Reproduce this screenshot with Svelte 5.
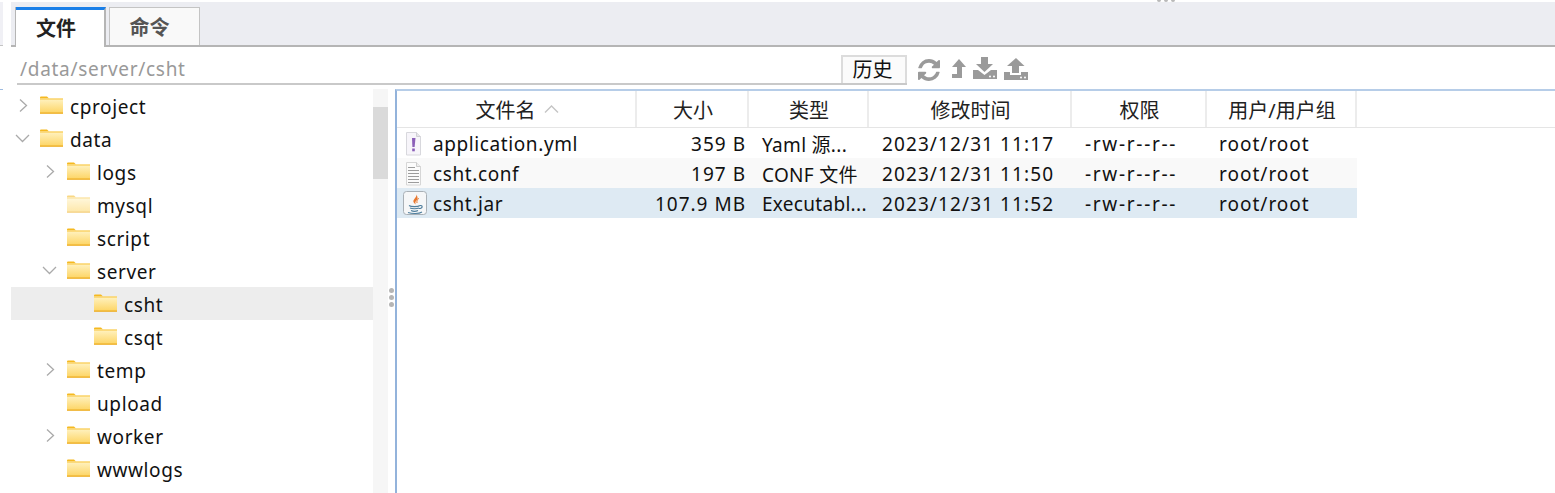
<script>
    const tree = [
        { name: "cproject", depth: 0, arrow: "right" },
        { name: "data", depth: 0, arrow: "down" },
        { name: "logs", depth: 1, arrow: "right" },
        { name: "mysql", depth: 1, pale: true },
        { name: "script", depth: 1 },
        { name: "server", depth: 1, arrow: "down" },
        { name: "csht", depth: 2, selected: true },
        { name: "csqt", depth: 2 },
        { name: "temp", depth: 1, arrow: "right" },
        { name: "upload", depth: 1 },
        { name: "worker", depth: 1, arrow: "right" },
        { name: "wwwlogs", depth: 1 }
    ];

    const files = [
        { icon: "yml", name: "application.yml", size: "359 B", type: "Yaml 源...", time: "2023/12/31 11:17", perm: "-rw-r--r--", owner: "root/root" },
        { icon: "conf", name: "csht.conf", size: "197 B", type: "CONF 文件", time: "2023/12/31 11:50", perm: "-rw-r--r--", owner: "root/root" },
        { icon: "jar", name: "csht.jar", size: "107.9 MB", type: "Executabl...", time: "2023/12/31 11:52", perm: "-rw-r--r--", owner: "root/root" }
    ];
</script>

<div class="page">
    <div class="edge">
        <div class="edge-top"></div>
        <div class="edge-blue"></div>
    </div>

    <div class="main">
        <div class="top-strip">
            <span class="grip-top"><i></i><i></i><i></i></span>
        </div>

        <div class="tabbar">
            <div class="tab active">文件</div>
            <div class="tab">命令</div>
        </div>

        <div class="toolbar">
            <div class="path-field">
                <span class="path">/data/server/csht</span>
                <button class="history">历史</button>
            </div>
            <div class="tools">
                <svg class="tool" width="22" height="22" viewBox="0 0 1536 1536"><path fill="#9a9a9a" d="M1511 928q0 5-1 7-64 268-268 434.5t-478 166.5q-146 0-282.5-55t-243.5-157l-129 129q-19 19-45 19t-45-19-19-45v-448q0-26 19-45t45-19h448q26 0 45 19t19 45-19 45l-137 137q71 66 161 102t187 36q134 0 250-65t186-179q11-17 53-117 8-23 30-23h192q13 0 22.5 9.5t9.5 22.5zm25-800v448q0 26-19 45t-45 19h-448q-26 0-45-19t-19-45 19-45l138-138q-148-137-349-137-134 0-250 65t-186 179q-11 17-53 117-8 23-30 23h-199q-13 0-22.5-9.5t-9.5-22.5v-7q65-268 270-434.5t480-166.5q146 0 284 55.5t245 156.5l130-129q19-19 45-19t45 19 19 45z"/></svg>
                <svg class="tool up" width="16" height="19" viewBox="0 0 16 19"><path fill="#9a9a9a" d="M8 0 15 8H11V19H1V15H6V8H1Z"/></svg>
                <svg class="tool down" width="24" height="22" viewBox="0 0 24 22"><path fill="#9a9a9a" d="M8 0H15V7H20L11.5 15 3 7H8ZM0 13H5L11.5 18 18 13H24V22H0Z"/><circle cx="17" cy="19.5" r="1" fill="#fff"/><circle cx="21" cy="19.5" r="1" fill="#fff"/></svg>
                <svg class="tool upl" width="24" height="22" viewBox="0 0 24 22"><path fill="#9a9a9a" d="M12 0 20.5 8H15V15H8V8H3ZM0 14H6V17H17V14H24V22H0Z"/><circle cx="17" cy="19.5" r="1" fill="#fff"/><circle cx="21" cy="19.5" r="1" fill="#fff"/></svg>
            </div>
        </div>

        <div class="body">
            <div class="tree">
                {#each tree as node}
                    <div class="node" class:selected={node.selected} class:d1={node.depth === 1} class:d2={node.depth === 2}>
                        <span class="arrow">
                            {#if node.arrow === "right"}
                                <svg class="chev-right" width="11" height="15" viewBox="0 0 11 15"><path d="M2 1.5 8.5 7.5 2 13.5" fill="none" stroke="#aaa" stroke-width="1.3"/></svg>
                            {:else if node.arrow === "down"}
                                <svg width="15" height="11" viewBox="0 0 15 11"><path d="M1 2 7.5 8.5 14 2" fill="none" stroke="#aaa" stroke-width="1.3"/></svg>
                            {/if}
                        </span>
                        <svg class="folder" class:pale={node.pale} width="23" height="18" viewBox="0 0 23 18">
                            <defs>
                                <linearGradient id="fold" x1="0" y1="0" x2="0" y2="1">
                                    <stop offset="0" stop-color="#fff3c4"/>
                                    <stop offset="1" stop-color="#fdd462"/>
                                </linearGradient>
                            </defs>
                            <path d="M0 1.5Q0 .5 1 .5H7L9 2.5H0Z" fill="#f5b921"/>
                            <rect x="0" y="2.5" width="23" height="15" fill="url(#fold)"/>
                            <rect x="0" y="2.5" width="23" height="1" fill="#f8c33c"/>
                            <rect x="0" y="16.5" width="23" height="1.2" fill="#eba91e"/>
                        </svg>
                        <span class="node-name">{node.name}</span>
                    </div>
                {/each}
            </div>

            <div class="scrollbar"><div class="thumb"></div></div>

            <div class="splitter"><i></i><i></i><i></i></div>

            <div class="pane">
                <div class="row head">
                    <div class="th">文件名
                        <svg class="sort" width="15" height="8" viewBox="0 0 15 8"><path d="M1 7.5 7.5 1 14 7.5" fill="none" stroke="#c4c4c4" stroke-width="1.4"/></svg>
                    </div>
                    <div class="th">大小</div>
                    <div class="th">类型</div>
                    <div class="th">修改时间</div>
                    <div class="th">权限</div>
                    <div class="th">用户/用户组</div>
                </div>

                {#each files as file, i}
                    <div class="row item" class:alt={i === 1} class:sel={i === 2}>
                        <div class="cell name">
                            <span class="file-icon">
                                {#if file.icon === "yml"}
                                    <svg width="20" height="25" viewBox="0 0 20 25"><path d="M3.5 1.5H13.5L17.5 5.5V24H3.5Z" fill="#f7f5fa" stroke="#d8d8dd"/><path d="M13.5 1.5V5.5H17.5" fill="#e6e6ea" stroke="#d0d0d5"/><path d="M9 7H12.5L11.6 16H9.4Z" fill="#8b5fb8"/><rect x="9.2" y="17.5" width="2.6" height="2.8" fill="#8b5fb8"/></svg>
                                {:else if file.icon === "conf"}
                                    <svg width="20" height="25" viewBox="0 0 20 25"><path d="M3.5 1.5H13.5L17.5 5.5V24H3.5Z" fill="#fbfbfb" stroke="#d6d6d6"/><path d="M13.5 1.5V5.5H17.5" fill="#eee" stroke="#ccc"/><path d="M5 6.5H12M5 9.5H16M5 12.5H16M5 15.5H16M5 18.5H16M5 21.5H16" stroke="#9c9c9c" stroke-width="1"/></svg>
                                {:else}
                                    <svg width="25" height="25" viewBox="0 0 25 25"><rect x=".5" y=".5" width="23" height="23" rx="3" fill="#f6f7f8" stroke="#a9b0b6"/><path d="M13 3C15 6 9.500 8 10.500 11 11 12.500 13 13.500 13 13.500 12 12 12 11 13.500 9.500 15 8 15 6 13 3Z" fill="#e8772e"/><path d="M15.500 7C14.500 9 13.500 10 14 12" fill="none" stroke="#e8772e" stroke-width="1"/><path d="M6 14.500C8 16 15 16 17 14.500M7 17C9 18 14 18 16 17M8 19.500C10 20.500 13 20.500 15 19.500M5 21.500C9 23 16 23 19 21M17 14.500C20 14 20 17.500 16 17.500" fill="none" stroke="#4f7f9e" stroke-width="1.100"/></svg>
                                {/if}
                            </span>
                            <span class="file-name">{file.name}</span>
                        </div>
                        <div class="cell size">{file.size}</div>
                        <div class="cell type">{file.type}</div>
                        <div class="cell time">{file.time}</div>
                        <div class="cell perm">{file.perm}</div>
                        <div class="cell owner">{file.owner}</div>
                    </div>
                {/each}
            </div>
        </div>
    </div>
</div>

<style>
    :global(body){
        margin: 0;
        background-color: white;
        overflow: hidden;
    }

    .page{
        /* design */
        font-family: "Noto Sans", "Noto Sans CJK SC", sans-serif;
        font-size: 19px;
        color: #111;
        background-color: white;

        /* size */
        height: 493px;
        width: 1555px;
        overflow: hidden;

        /* display */
        display: flex;
    }

    .edge{
        width: 11px;
        flex: none;
    }

    .edge-top{
        width: 3px;
        height: 43px;
        margin-top: 2px;
        background-color: #f0f0f5;
        border-bottom: 1px solid #c4c4c4;
    }

    .edge-blue{
        width: 3px;
        height: 1px;
        margin-top: 43px;
        background-color: #9dbbe0;
    }

    .main{
        flex: 1;
        min-width: 0;
        display: flex;
        flex-direction: column;
    }

    .top-strip{
        height: 2px;
        padding-left: 1146px;
        display: flex;
    }

    .grip-top{
        display: flex;
        gap: 3px;
    }

    .grip-top i{
        width: 4px;
        height: 2px;
        border-radius: 0 0 2px 2px;
        background-color: #b9b9b9;
    }

    .tabbar{
        /* design */
        background-color: #ecedf2;
        border-bottom: 2px solid #b5b5b5;

        /* size */
        height: 43px;
        padding-left: 5px;

        /* display */
        display: flex;
        align-items: flex-end;
        gap: 3px;
    }

    .tab{
        /* design */
        background-color: #f9f9f9;
        border: 1px solid #c4c4c4;
        border-bottom: none;
        color: #555;
        font-weight: 700;
        font-size: 20px;

        /* size */
        box-sizing: border-box;
        width: 91px;
        height: 38px;
        padding-right: 10px;

        /* display */
        display: flex;
        align-items: center;
        justify-content: center;
    }

    .tab.active{
        background-color: white;
        border-left: none;
        border-right: 2px solid #b5b5b5;
        border-top: 3px solid #1a7fe8;
        box-shadow: -1px 0 0 #b5b5b5;
        color: #222;
        width: 90px;
        height: 40px;
        margin-bottom: -2px;
        padding-bottom: 2px;
        padding-right: 8px;
    }

    .toolbar{
        height: 38px;
        margin-left: 6px;
        display: flex;
    }

    .path-field{
        box-sizing: border-box;
        width: 890px;
        border-bottom: 2px solid #c9c9c9;
        padding-left: 3px;
        display: flex;
        align-items: flex-end;
        justify-content: space-between;
    }

    .path{
        color: #999;
        font-size: 19px;
        letter-spacing: 0.7px;
        line-height: 28px;
    }

    .history{
        /* design */
        background-color: #fbfbfb;
        border: 2px solid #dcdcdc;
        border-bottom: none;
        color: #111;
        font-family: inherit;
        font-size: 20px;

        /* size */
        box-sizing: border-box;
        width: 66px;
        height: 28px;
        padding: 0 3px 0 0;
        line-height: 26px;
    }

    .tools{
        display: flex;
        align-items: flex-start;
        padding-top: 12px;
        padding-left: 11px;
    }

    .tool{
        display: block;
    }

    .up{
        margin-left: 11px;
    }

    .down{
        margin-left: 6px;
        margin-top: -2px;
    }

    .upl{
        margin-left: 7px;
        margin-top: -1px;
    }

    .body{
        margin-top: 4px;
        flex: 1;
        min-height: 0;
        display: flex;
    }

    .tree{
        width: 362px;
        flex: none;
    }

    .node{
        height: 33px;
        padding-left: 4px;
        display: flex;
        align-items: center;
        letter-spacing: 0.6px;
    }

    .node.d1{
        padding-left: 31px;
    }

    .node.d2{
        padding-left: 58px;
    }

    .node.selected{
        background-color: #ededed;
    }

    .arrow{
        width: 25px;
        height: 15px;
        flex: none;
        display: flex;
        align-items: center;
    }

    .chev-right{
        margin-left: 3px;
    }

    .folder{
        flex: none;
        margin-top: -1px;
    }

    .folder.pale{
        opacity: 0.55;
    }

    .node-name{
        margin-left: 7px;
        line-height: 29px;
        padding-top: 4px;
    }

    .scrollbar{
        width: 15px;
        flex: none;
        background-color: #f6f6f6;
    }

    .thumb{
        height: 72px;
        margin-top: 18px;
        background-color: #dadada;
    }

    .splitter{
        width: 7px;
        flex: none;
        padding-top: 199px;
        padding-left: 2px;
        box-sizing: border-box;
        display: flex;
        flex-direction: column;
        gap: 2px;
    }

    .splitter i{
        width: 5px;
        height: 5px;
        margin-left: -1px;
        border-radius: 50%;
        background-color: #b5b5b5;
    }

    .pane{
        flex: 1;
        min-width: 0;
        border-left: 2px solid #93b3db;
        border-top: 2px solid #b6cde8;
    }

    .row{
        width: 960px;
        display: grid;
        grid-template-columns: 240px 112px 120px 203px 135px 150px;
    }

    .head{
        width: 100%;
        height: 37px;
        box-sizing: border-box;
        border-bottom: 1px solid #e5e5e5;
    }

    .th{
        box-sizing: border-box;
        border-right: 2px solid #ececec;
        padding-left: 2px;
        display: flex;
        align-items: center;
        justify-content: center;
        gap: 8px;
        color: #222;
        font-size: 20px;
    }

    .item{
        height: 30px;
        align-items: center;
        letter-spacing: 0.6px;
    }

    .alt{
        background-color: #f9f9f9;
    }

    .sel{
        background-color: #deeaf3;
    }

    .cell{
        padding-left: 13px;
        padding-top: 2px;
        white-space: nowrap;
        overflow: hidden;
    }

    .cell.name{
        padding-left: 0;
        padding-top: 0;
        display: flex;
        align-items: center;
    }

    .file-name{
        padding-top: 2px;
    }

    .file-icon{
        width: 36px;
        padding-left: 6px;
        box-sizing: border-box;
        flex: none;
        display: flex;
        align-items: center;
    }

    .cell.size{
        padding-left: 0;
        padding-right: 3px;
        text-align: right;
        letter-spacing: 1px;
    }

    .cell.type{
        letter-spacing: 0.3px;
    }

    .cell.time{
        letter-spacing: 1.1px;
    }

    .cell.perm{
        letter-spacing: 1.7px;
    }

    .cell.owner{
        padding-left: 12px;
        letter-spacing: 1px;
    }
</style>
